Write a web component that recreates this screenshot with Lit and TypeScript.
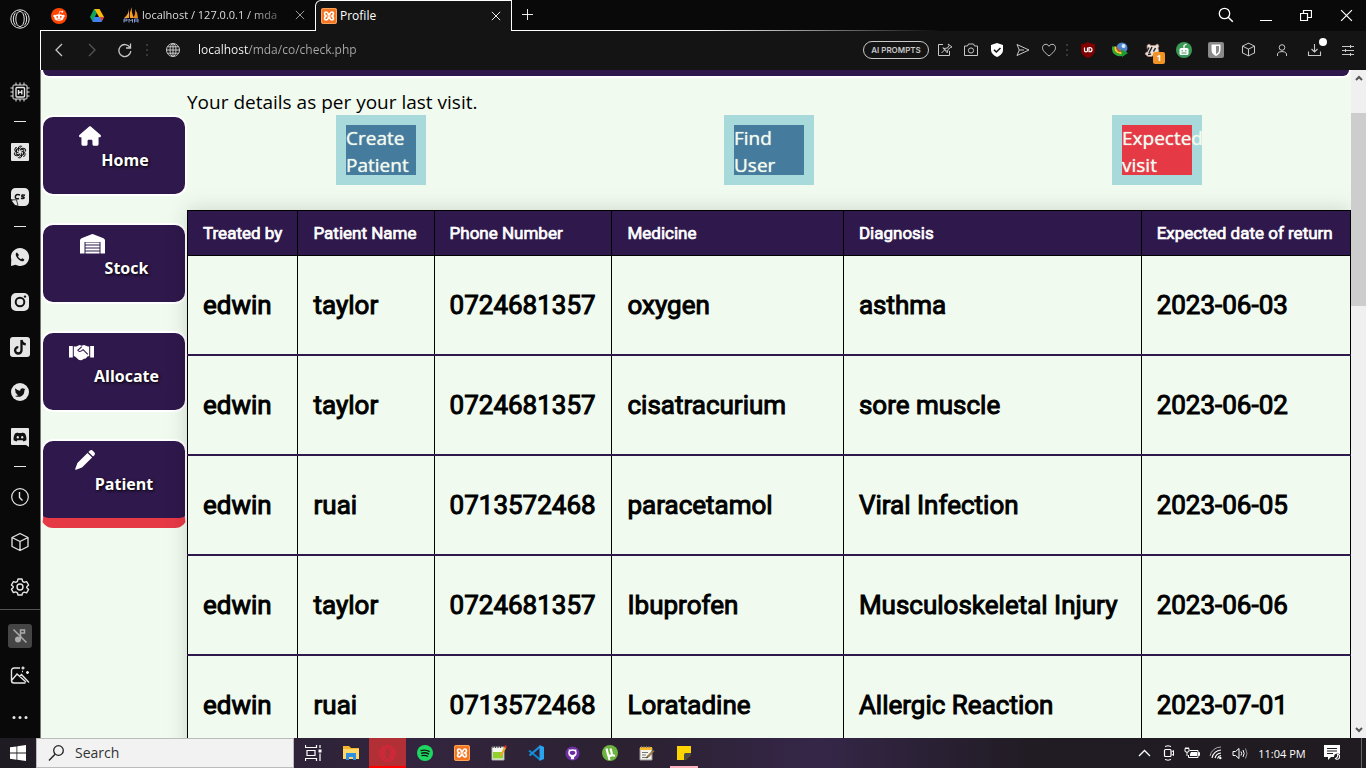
import { LitElement, html, css, svg, TemplateResult } from "lit";
import { customElement, property } from "lit/decorators.js";

type Glyph = TemplateResult;

/** Wraps drawing instructions in a sized SVG. */
const pic = (body: Glyph, w = 20, h = w, box = `0 0 ${w} ${h}`) =>
  html`<svg class="ico" width=${w} height=${h} viewBox=${box} fill="none" stroke="currentColor" aria-hidden="true">${body}</svg>`;

const cube = svg`<path d="M10 1.5 18 5.5v9L10 18.5 2 14.5v-9zM2 5.5l8 4 8-4M10 9.5v9" stroke-linejoin="round"/>`;
const xampp = svg`<rect x="0" y="0" width="16" height="16" rx="2" fill="#f37623" stroke="none"/><rect x=".5" y=".5" width="15" height="15" rx="2" stroke="#f9a55f"/><path d="M5.200 4C3 4 3 7 5.200 8 3 9 3 12 5.200 12 7.500 12 7 8.800 8 8.800S8.500 12 10.800 12C13 12 13 9 10.800 8 13 7 13 4 10.800 4 8.500 4 9 7.200 8 7.200S7.500 4 5.200 4z" stroke="#fff" stroke-width="1.700"/>`;
const operaO = svg`<circle cx="10" cy="10" r="9.200"/><ellipse cx="10" cy="10" rx="4.200" ry="7.600"/><path d="M6 3.500C2.500 6 2.500 14 6 16.500M14 3.500c3.500 2.500 3.500 10.500 0 13"/>`;
const cross = svg`<path d="m1 1 10 10M11 1 1 11" stroke-width="1.100"/>`;

const g: Record<string, Glyph> = {
  opera: pic(operaO),
  chip: pic(svg`<rect x="3" y="3" width="14" height="14" rx="1"/><rect x="6" y="5.500" width="8.500" height="9.500" rx="1" stroke-width="1.400"/><path d="M8.500 8v4.500M11.800 8v4.500M8.500 10.300h3.300" stroke-width="1.400"/><path d="M6 3V.5M10 3V.5M14 3V.5M6 17v2.500M10 17v2.500M14 17v2.500M3 6H.5M3 10H.5M3 14H.5M17 6h2.500M17 10h2.500M17 14h2.500"/>`),
  gpt: pic(svg`<rect x="1" y="1" width="18" height="18" rx="1" fill="#e6e6e6" stroke="none"/><g stroke="#111" stroke-width="1">${[0, 60, 120, 180, 240, 300].map((a) => svg`<path transform="rotate(${a} 10 10)" d="M8.300 9.400V6.300a2.200 2.200 0 0 1 4-1.300M8.300 7l2-1.200 2.800 1.600"/>`)}</g>`),
  cs: pic(svg`<path d="M5.500 1h9A4.500 4.500 0 0 1 19 5.500v9a4.500 4.500 0 0 1-4.500 4.500H8.500L1 12V5.500A4.500 4.500 0 0 1 5.500 1z" fill="#e6e6e6" stroke="none"/><path d="M1.500 13.500 7 14.500 8 18.500 5 18z" fill="#e6e6e6" stroke="none"/><path d="M1 12.800h5.500L8 18.800" stroke="#111" stroke-width=".8"/><path d="M10 8c-3-1.200-4.500 0-4.700 1.800S7 12.200 9 11.500M15 8.200c-2.200-.5-3.300-.2-3.300.7s2.600.7 2.500 1.700-1.800 1-3.300.6" stroke="#111" stroke-width="1.500"/>`),
  whatsapp: pic(svg`<path d="M10 1a9 9 0 1 1-4.400 16.800L1 19l.3-6.500A9 9 0 0 1 10 1z" fill="#e6e6e6" stroke="none"/><path d="M7 5.400c-1.600.7-1.600 2.700-.4 4.600s3.400 4 5.400 4.300c1.300.2 2.400-.8 2.300-1.900l-2-1.100-1.200 1c-1.300-.4-2.700-1.800-3.100-3l1-1.200z" fill="#111" stroke="none"/>`),
  instagram: pic(svg`<rect x="1" y="1" width="18" height="18" rx="5" fill="#e6e6e6" stroke="none"/><circle cx="10" cy="10" r="4.300" stroke="#111" stroke-width="2"/><circle cx="15" cy="4.600" r="1.200" fill="#111" stroke="none"/>`),
  tiktok: pic(svg`<rect x="0" y="0" width="20" height="20" rx="3" fill="#e6e6e6" stroke="none"/><path d="M11.500 3v10.300a3.200 3.200 0 1 1-3.200-3.200M11.500 3c.3 2.500 1.800 4 4.300 4.300" stroke="#111" stroke-width="2.300"/>`),
  twitter: pic(svg`<circle cx="10" cy="10" r="9" fill="#e6e6e6" stroke="none"/><path d="M15.500 6.600l-1.200.4c-1-1.500-4.300-1.100-4.100 1.700-2 0-3.600-1-4.800-2.500-.7 1.300-.3 2.500.7 3.200l-.9-.2c0 1.100.7 2 1.900 2.300h-.9c.3.900 1.100 1.400 2.100 1.500-1 .7-2 .9-3.200.9 4.800 2.600 9.500-.3 9.300-5.700z" fill="#111" stroke="none"/>`),
  discord: pic(svg`<path d="M2 1h16a1 1 0 0 1 1 1v18l-3-2H2a1 1 0 0 1-1-1V2a1 1 0 0 1 1-1z" fill="#e6e6e6" stroke="none"/><path d="M7.500 5.500 8 6h4l.5-.5 2.500 1c1.300 2.300 1.600 4.300 1.400 6.700l-2.900 1.400-.9-1.300H7.400l-.9 1.300-2.900-1.400C3.400 10.800 3.700 8.800 5 6.500z" fill="#111" stroke="none"/><ellipse cx="7.800" cy="10.300" rx="1.100" ry="1.300" fill="#e6e6e6" stroke="none"/><ellipse cx="12.200" cy="10.300" rx="1.100" ry="1.300" fill="#e6e6e6" stroke="none"/>`),
  clock: pic(svg`<circle cx="10" cy="10" r="8.300" stroke-width="1.200"/><path d="M9.500 5v5.500l3 3" stroke-width="1.400"/>`),
  cube: pic(svg`<g stroke-width="1.300">${cube}</g>`),
  cubeSmall: pic(svg`<g stroke-width="1.400">${cube}</g>`, 15, 15, "0 0 20 20"),
  gear: pic(svg`<path d="M8 2h4l.6 2.400 1.600.9 2.400-.7 2 3.400-1.800 1.700v1l1.800 1.700-2 3.400-2.400-.7-1.600.9L12 18H8l-.6-2.200-1.600-.9-2.400.7-2-3.400 1.800-1.700v-1L1.400 8l2-3.400 2.400.7 1.600-.9z" stroke-width="1.400" stroke-linejoin="round"/><circle cx="10" cy="10" r="3" stroke-width="1.400"/>`),
  muted: pic(svg`<rect width="24" height="24" rx="3" fill="#454545" stroke="none"/><circle cx="10" cy="15.500" r="3" fill="#aaa" stroke="none"/><path d="M12.500 15V6h4v3h-4" stroke="#aaa" stroke-width="1.500"/><path d="m5.500 5.500 13 13" stroke="#aaa" stroke-width="1.500"/>`, 24),
  image: pic(svg`<path d="M10 2H4a2.500 2.500 0 0 0-2.500 2.500v10A2.500 2.500 0 0 0 4 17h11.500M2 14l5-6 9 8M9.500 10.500l2-2 7.500 8M13 .5v3M11.500 2h3M17.500 5v3M16 6.500h3M12 5.500h1" stroke-width="1.400"/>`),
  dots: pic(svg`<g fill="currentColor" stroke="none"><circle cx="4" cy="11.500" r="1.500"/><circle cx="10" cy="11.500" r="1.500"/><circle cx="16" cy="11.500" r="1.500"/></g>`),

  reddit: pic(svg`<circle cx="8" cy="8" r="8" fill="#ff4500" stroke="none"/><ellipse cx="8" cy="9.500" rx="4.600" ry="3.300" fill="#fff" stroke="none"/><g fill="#fff" stroke="none"><circle cx="11.300" cy="3.800" r="1"/><circle cx="3.500" cy="8" r="1.200"/><circle cx="12.500" cy="8" r="1.200"/></g><path d="m8 6 .7-2.800 2.300.6" stroke="#fff" stroke-width=".7"/><circle cx="6.200" cy="8.900" r=".9" fill="#ff4500" stroke="none"/><circle cx="9.800" cy="8.900" r=".9" fill="#ff4500" stroke="none"/><path d="M6 10.900q2 1.300 4 0" stroke="#ff4500" stroke-width=".6"/>`, 16),
  drive: pic(svg`<g stroke="none"><path d="M5 1h5L3.500 13.500 1 9z" fill="#11a35b"/><path d="M5.500 1h5L15 9h-5z" fill="#ffbe05"/><path d="M5 9h10l-2.500 5h-9z" fill="#3f83f3"/><path d="M11 9h4l-2.300 4.600z" fill="#e6402f"/></g>`, 16),
  pma: pic(svg`<g stroke="none"><path d="M6 1Q6 7 1 11h5zM9 0q-3 6-2 11h4Q8 5 9 0z" fill="#f7a12c"/><path d="M12 2q1 5-2 9h5q0-5-3-9z" fill="#e88a1a"/></g><path d="M1 12v3.500M1 12h3v1.800H1M6 15.500V12l1.700 2L9.500 12v3.500M11.500 15.500V12H15v3.500M11.500 14H15" stroke="#8a9ad0"/>`, 16),
  xampp: pic(xampp, 16),
  close: pic(cross, 10, 10, "0 0 12 12"),
  closeTab: pic(cross, 10, 10, "0 0 12 12"),
  plus: pic(svg`<path d="M6 0v12M0 6h12"/>`, 11, 11, "0 0 12 12"),
  search: pic(svg`<circle cx="6.500" cy="6.500" r="5.200" stroke-width="1.300"/><path d="m10.200 10.200 4.600 4.600" stroke-width="1.500"/>`, 16),
  min: pic(svg`<path d="M0 12.500h12"/>`, 12, 14),
  restore: pic(svg`<path d="M.5 4.500h7v7h-7zM3.500 4.500v-3h8v7h-4" stroke-width="1.200"/>`, 12),
  win: pic(cross, 13, 13, "0 0 12 12"),
  back: pic(svg`<path d="M8 2 2 8l6 6" stroke-width="1.300"/>`, 10, 16),
  fwd: pic(svg`<path d="m2 2 6 6-6 6" stroke-width="1.300"/>`, 10, 16),
  reload: pic(svg`<path d="M13 5.500A6 6 0 1 0 13.800 9M13.500 1.500v4.500H9" stroke-width="1.300"/>`, 16),
  globe: pic(svg`<circle cx="8" cy="8" r="6.500"/><ellipse cx="8" cy="8" rx="3" ry="6.500"/><path d="M1.500 8h13M2.500 4.800h11M2.500 11.200h11M8 1.500v13"/>`, 16),
  sep: pic(svg`<path d="M1 0v2M1 5v2M1 10v2" stroke="#444" stroke-width="1.500"/>`, 2, 12),
  pin: pic(svg`<path d="M6 2.500H1.500v11h11V9M4.500 11l3-3M6 5.500 9.500 9M7 6.500l3.500-.5L12 3.500l-1-1.500 4 3-1.500.5-2.500 2-.8 3.300L6 6z"/>`, 16),
  camera: pic(svg`<path d="M1.500 4h3l1-2h5l1 2h3v9.500h-13z" stroke-linejoin="round"/><circle cx="8" cy="8.500" r="2.600"/>`, 16),
  shield: pic(svg`<path d="M8 1 14 3v5c0 3-2.500 5.500-6 7-3.500-1.500-6-4-6-7V3z" fill="#fff" stroke="none"/><path d="m5 7.700 2.300 2.300L11.500 6" stroke="#141414" stroke-width="1.600"/>`, 16),
  send: pic(svg`<path d="M2 2.500 14 8 2 13.500 4.300 8zM4.300 8H9" stroke-linejoin="round"/>`, 16),
  heart: pic(svg`<path d="M8 14C4 10.800 1.500 8.500 1.500 5.700 1.500 2 6.200 1 8 4.300 9.800 1 14.500 2 14.500 5.700 14.500 8.500 12 10.800 8 14z"/>`, 16),
  ublock: pic(svg`<path d="M8 0q3 2 7 2v6c0 4-3 6.500-7 8-4-1.500-7-4-7-8V2q4 0 7-2z" fill="#800000" stroke="none"/><path d="M4.500 5.500v3.300q0 1 1.500 1t1.500-1V5.500M9 5.700v4h.8q2.200 0 2.200-2t-2.200-2z" stroke="#fff" stroke-width="1.200"/>`, 16),
  idm: pic(svg`<circle cx="10" cy="6" r="5.500" fill="#4f83cc" stroke="none"/><circle cx="11.500" cy="4" r="2" fill="#d8ecff" stroke="none"/><path d="M1.500 4.500C0 11 6 15 12 12" stroke="#2fa83c" stroke-width="2.500"/><path d="M3.500 4.500C2.500 9 6 12 11 10.500" stroke="#f3d321" stroke-width="2"/><path d="M5.500 5.500C5 8 7.500 10 10 9" stroke="#e04828" stroke-width="1.600"/><path d="m9 7 7 4-6 4z" fill="#1f9a30" stroke="none"/>`, 16),
  badger: pic(svg`<path d="M3 3.500 5 2l2 1.500h4L13.500 2 15 4l-1 2 1 3.500-4 2-3 3H4L1 12l2.500-3.500z" fill="#e8e0da" stroke="#b98a72" stroke-width=".8"/><path d="M5 5.500 2.500 10M8 5 5 11M11.500 6l-2 3.500M4 12.500l3-.5" stroke="#222" stroke-width="1.500"/>`, 16),
  robot: pic(svg`<circle cx="8" cy="8" r="8" fill="#3a9a55" stroke="none"/><rect x="3.500" y="6" width="9" height="7" rx="1.500" fill="#fff" stroke="none"/><path d="M8 6V3.500L10 2M5.500 8.800h1.500M9 8.800h1.500M5.500 11h5M2.500 8v3M13.500 8v3" stroke="#3a9a55"/><path d="M8 6V3.500L10.500 2" stroke="#fff" stroke-width="1.300"/>`, 16),
  bitwarden: pic(svg`<rect width="16" height="16" rx="2" fill="#8a8a8a" stroke="none"/><path d="M3.500 2.500h9V8c0 3-2 4.700-4.500 6-2.500-1.300-4.500-3-4.500-6z" fill="#fff" stroke="none"/><path d="M8 4h3v4c0 2-1 3-3 4.200z" fill="#8a8a8a" stroke="none"/>`, 16),
  user: pic(svg`<circle cx="7" cy="4.500" r="2.800"/><path d="M2.500 13V10.500Q4 8.500 7 8.500t4.500 2V13"/>`, 14),
  download: pic(svg`<path d="M7.500 2v8M4.500 7l3 3 3-3M1.500 9.500v4h12v-4" stroke-width="1.100"/>`, 15),
  sliders: pic(svg`<path d="M1 3.500h12M1 7.500h12M1 11.500h12M9.500 2v3M4.500 6v3M9.500 10v3"/>`, 14),
  up: pic(svg`<path d="m1 5 3-3 3 3" stroke="#555" stroke-width="2"/>`, 8, 7),
  down: pic(svg`<path d="m1 2 3 3 3-3" stroke="#555" stroke-width="2"/>`, 8, 7),

  home: pic(svg`<path fill="currentColor" stroke="none" d="M575.8 255.500c0 18-15 32.100-32 32.100h-32l.7 160.200c0 2.700-.2 5.400-.5 8.100V472c0 22.100-17.900 40-40 40H392c-22.100 0-40-17.900-40-40v-88c0-17.700-14.300-32-32-32h-64c-17.700 0-32 14.300-32 32v88c0 22.100-17.900 40-40 40h-80c-22.100 0-40-17.900-40-40V287.600H32c-18 0-32-14-32-32.100 0-9 3-17 10-24L266.400 8c7-7 15-8 22-8s15 2 21 7l255.400 224.500c8 7 12 15 11 24z"/>`, 22, 20, "0 0 576 512"),
  stock: pic(svg`<path fill="currentColor" stroke="none" d="M0 19.500V6.500Q0 5 1.500 4.300L11.700.3q.8-.4 1.600 0l10.200 4Q25 5 25 6.500v13h-4.500V8h-16v11.500z"/><path d="M5.500 9.500h14M5.500 12.500h14M5.500 15.500h14M5.500 18.500h14" stroke-width="2"/>`, 25, 20),
  allocate: pic(svg`<g fill="currentColor" stroke="none"><path d="M0 4h3.800v11.500H0zM21.200 4H25v11.500h-3.800z"/><path d="M4.800 4.500h2.400L10.500 3l2 .8 2.500-.8 4 1.500h1.200v9.800h-1.500l-2 2.200-1.700.2-2.500 1.500-2.500-.3-4.200-3.600H4.800z"/></g><path d="m12.800 4.600-4 3.700q1.300 2 3.600.6l1.700-1.200 4.700 4.600" stroke="#2f184b" stroke-width="1.100"/>`, 25, 20),
  patient: pic(svg`<path fill="currentColor" stroke="none" d="m13.400 2 1.200-1.200q1.600-1.400 3.200 0l1.400 1.400q1.500 1.600 0 3.200L18 6.600zM12.500 2.900l4.600 4.600L7 17.600l-6 2.200q-.9.200-.8-.8l2.200-6z"/>`, 20),

  start: pic(svg`<path d="M0 2.300 6.500 1.400V7.600H0zM7.300 1.300 16 0v7.600H7.300zM0 8.400h6.500v6.300L0 13.800zM7.300 8.400H16V16l-8.700-1.200z" fill="#fff" stroke="none"/>`, 16),
  find: pic(svg`<circle cx="10.500" cy="5.500" r="4.800" stroke-width="1.300"/><path d="M7 9.200 1 15.500" stroke-width="1.400"/>`, 17),
  task: pic(svg`<path d="M.5 0v2.500h11V0M2 5.500h8v5H2zM.5 16v-2.500h11V16M15 0v3M15 8.500V16" stroke-width="1.200"/><path d="M13.500 4.500h3v3h-3z" fill="#fff" stroke="none"/>`, 17, 16),
  folder: pic(svg`<g stroke="none"><path d="M0 1h6l2 2h8v11H0z" fill="#f5b52a"/><path d="M0 4h16v10H0z" fill="#ffd869"/><path d="M3 8h10v7h-3v-3H6v3H3z" fill="#2f8fe0"/></g>`, 16),
  operaRed: pic(svg`<g stroke="#f0203f">${operaO}</g>`, 17, 17, "0 0 20 20"),
  spotify: pic(svg`<circle cx="8" cy="8" r="8" fill="#1ed760" stroke="none"/><path d="M3.500 5.700q5-1.500 9.200 1M4 8.300q4.500-1.300 8 .9M4.500 10.700q3.500-1 6.500.8" stroke="#151515" stroke-width="1.400"/>`, 16),
  notepadpp: pic(svg`<path d="M1 2h12v13H1z" fill="#f4f7ef" stroke="#aaa"/><path d="M2 7h10v6.500H2z" fill="#8fd02f" stroke="none"/><path d="M2 1v2M4.500 1v2M7 1v2M9.500 1v2" stroke="#444"/><path d="m14.500 2-5 9" stroke="#f2a51d" stroke-width="2"/><path d="m13.500 1 2 1" stroke="#d22" stroke-width="2"/>`, 16),
  vscode: pic(svg`<path d="M12 14.500 1 5.500" stroke="#0d84cf" stroke-width="2.200"/><path d="M1.500 10.500 12 1.500" stroke="#1b8fdc" stroke-width="2.200"/><path d="m11.500 0 4.500 2v12l-4.500 2z" fill="#2aa4ee" stroke="none"/>`, 16),
  github: pic(svg`<circle cx="8" cy="8" r="7.500" fill="#6e2fa5" stroke="none"/><path d="M8 3.500c-6 0-5.500 7-1.700 8.300V14h3.400v-2.200C13.500 10.500 14 3.500 8 3.500z" fill="#fff" stroke="none"/><path d="M4 6.500V3.200l2 1.200h4l2-1.200v3.300q0 3.500-4 3.500T4 6.500z" fill="#fff" stroke="none"/><ellipse cx="8" cy="7.300" rx="3" ry="2.200" fill="#6e2fa5" stroke="none"/>`, 15, 15, "0 0 16 16"),
  utorrent: pic(svg`<circle cx="8" cy="8" r="8" fill="#6cb33f" stroke="none"/><path d="M4.500 3.500 6 9.500q1 2 3 1.200 1.300-.7.800-2.200l-1.300-5M10 9.500q1 1.500 3 1" stroke="#fff" stroke-width="2.200"/><path d="m6 9 1.500 6" stroke="#fff" stroke-width="2"/>`, 16),
  note: pic(svg`<path d="M1 3h12v12H1z" fill="#f5f3ea" stroke="#999"/><path d="M1 2h12v3H1z" fill="#f5b82a" stroke="none"/><path d="M2.500 1v2M5 1v2M7.500 1v2M10 1v2M3 7.500h6M3 10h4M3 12.500h6" stroke="#777"/><path d="m14.500 5-6 6-1 2 2-1 6-6z" fill="#e9a23b" stroke="#333" stroke-width=".7"/>`, 16),
  sticky: pic(svg`<path d="M1 1h14v14H1z" fill="#ffd400" stroke="none"/><path d="M15 8v1.500L9.500 15H8V9.500Q8 8 9.500 8z" fill="#4a4a4a" stroke="none"/><path d="M15 9.500V15H9.500z" fill="#33262f" stroke="none"/>`, 16),
  caret: pic(svg`<path d="m1 7 5.500-5.500L12 7" stroke-width="1.300"/>`, 13, 9),
  meet: pic(svg`<rect x="2.500" y="4.500" width="6.500" height="7" rx="1" stroke-width="1.200"/><path d="m9.500 7 2-1.500v5L9.500 9M3 1.500q3-1.500 6 0M3 14.500q3 1.500 6 0"/>`, 13, 16),
  battery: pic(svg`<path d="M5.500 4.500H14v7H4.500V9M14.500 6.500v3h1v-3z"/><path d="M7 6h6v4H6V8z" fill="#fff" stroke="none"/><path d="M1 2.500v3q2 1.500 4 0v-3zM2 2.500V1M4 2.500V1M3 6v4" />`, 16, 14),
  wifi: pic(svg`<path d="M1 11A11 11 0 0 1 12 2" stroke="#aaa"/><path d="M3 13a9.500 9.500 0 0 1 9-8M6 13a7 7 0 0 1 6-5M8.500 13.500A4.500 4.500 0 0 1 12 10.500" stroke-width="1.200"/><circle cx="11.300" cy="13" r="1.200" fill="#fff" stroke="none"/>`, 14, 16),
  volume: pic(svg`<path d="M1 5.500h2.500L7 2.500v10L3.500 9.500H1z"/><path d="M9 5.500q1.300 2 0 4M11 4q2.300 3.500 0 7"/><path d="M13.500 2.500q3 5 0 10" stroke="#999"/>`, 17, 15),
  action: pic(svg`<path d="M0 0h16v12H7l-3 3v-3H0z" fill="#fff" stroke="none"/><path d="M3 3.500h10M3 6h10M3 8.500h6" stroke="#201c22" stroke-width="1.200"/><circle cx="13.500" cy="12" r="3.500" fill="#201c22" stroke="none"/><path d="M12 14q4 1 3.500-3.500-1-1.500-2-1.300 1 3-2 4.300z" stroke="#fff" stroke-width="1.100"/>`, 18, 17),
};

const reset = css`
  :host { box-sizing: border-box; font-family: "Open Sans", "Noto Sans", sans-serif; }
  *, *::before, *::after { box-sizing: border-box; }
  button { margin: 0; padding: 0; border: 0; background: none; color: inherit; font: inherit; display: flex; align-items: center; justify-content: center; flex: none; }
  .ico { display: block; flex: none; }
`;

@customElement("side-rail")
class SideRail extends LitElement {
  static styles = [reset, css`
    :host { width: 40px; flex: none; display: flex; flex-direction: column; background: #090909; color: #e6e6e6; overflow: hidden; }
    button { height: 45px; }
    .brand { height: 38px; margin-bottom: 31px; }
    .dash { height: 15px; flex: none; display: flex; align-items: center; justify-content: center; }
    .dash::before { content: ""; width: 12px; height: 1px; background: #e6e6e6; }
    .foot { border-top: 1px solid #555; padding-top: 6px; }
    .foot button { width: 100%; height: 40px; }
  `];
  render() {
    const items = ["chip", "-", "gpt", "cs", "-", "whatsapp", "instagram", "tiktok", "twitter", "discord", "-", "clock", "cube", "gear"];
    return html`
      <button class="brand" aria-label="Opera menu">${g.opera}</button>
      ${items.map((i) => i === "-" ? html`<div class="dash"></div>` : html`<button aria-label=${i}>${g[i]}</button>`)}
      <div class="foot">${["muted", "image", "dots"].map((i) => html`<button aria-label=${i}>${g[i]}</button>`)}</div>
    `;
  }
}

@customElement("browser-bar")
class BrowserBar extends LitElement {
  static styles = [reset, css`
    :host { display: block; flex: none; color: #fff; }
    .tabs { display: flex; height: 31px; background: linear-gradient(to right, #fff 0 50%, #090909 68%) bottom / 100% 1px no-repeat #090909; font-size: 12px; }
    .pinned { width: 38px; }
    .tab { display: flex; align-items: center; gap: 3px; padding-left: 7px; width: 199px; height: 30px; }
    .tab .label { flex: 1; overflow: hidden; white-space: nowrap; line-height: 30px; text-align: left; }
    .idle .label { font-size: 11px; color: #ddd; -webkit-mask-image: linear-gradient(to right, #000 75%, rgba(0, 0, 0, 0.3)); mask-image: linear-gradient(to right, #000 75%, rgba(0, 0, 0, 0.3)); }
    .tab button { width: 30px; height: 30px; }
    .idle button { color: #aaa; }
    .active { height: 31px; width: 197px; background: #141414; border: 1px solid #fff; border-bottom: 0; border-top-left-radius: 6px; padding-left: 5px; }
    .active .label { font-size: 12px; }
    .plus { width: 30px; height: 28px; }
    .window { margin-left: auto; display: flex; }
    .window button { width: 40px; height: 30px; }
    .tools { display: flex; align-items: center; height: 39px; background: #141414; border-left: 1px solid #fff; color: #c8c8c8; padding: 0 2px 2px 1px; }
    .nav { width: 33px; height: 36px; }
    .nav:disabled { color: #555; }
    .sep { display: flex; justify-content: center; width: 12px; flex: none; }
    .narrow { width: 10px; }
    .site { width: 39px; }
    .url { flex: 1; min-width: 0; border: 0; padding: 0 6px; font: 12px/20px "Open Sans", "Noto Sans", sans-serif; color: transparent; background: linear-gradient(to right, #fff 57px, #aaa 57px); -webkit-background-clip: text; background-clip: text; outline: 0; }
    .pill { height: 18px; width: 66px; border: 1px solid #c8c8c8; border-radius: 9px; font: 600 8px/16px Inter, sans-serif; margin-right: 3px; white-space: nowrap; }
    .quick { width: 26px; height: 36px; }
    .ext { width: 32px; height: 36px; position: relative; }
    .wide { width: 33px; }
    .badge { position: absolute; right: 3px; bottom: 4px; width: 12px; height: 12px; border-radius: 2px; background: #f29423; color: #fff; font: 700 9px/12px "Open Sans", sans-serif; }
    .dot { position: absolute; right: 4px; top: 6px; width: 8px; height: 8px; border-radius: 50%; background: #fff; }
  `];
  render() {
    return html`
      <div class="tabs">
        <button class="pinned" aria-label="Reddit">${g.reddit}</button>
        <button class="pinned" aria-label="Drive">${g.drive}</button>
        <div class="tab idle">${g.pma}<span class="label">localhost / 127.0.0.1 / mda</span><button aria-label="Close tab">${g.close}</button></div>
        <div class="tab active">${g.xampp}<span class="label">Profile</span><button aria-label="Close tab">${g.closeTab}</button></div>
        <button class="plus" aria-label="New tab">${g.plus}</button>
        <div class="window">${["search", "min", "restore", "win"].map((i) => html`<button aria-label=${i}>${g[i]}</button>`)}</div>
      </div>
      <div class="tools">
        <button class="nav" aria-label="Back">${g.back}</button>
        <button class="nav" aria-label="Forward" disabled>${g.fwd}</button>
        <button class="nav" aria-label="Reload">${g.reload}</button>
        <span class="sep">${g.sep}</span>
        <button class="site" aria-label="Site information">${g.globe}</button>
        <input class="url" aria-label="Address" .value=${"localhost/mda/co/check.php"} />
        <button class="pill">AI PROMPTS</button>
        ${["pin", "camera", "shield", "send", "heart"].map((i) => html`<button class="quick" aria-label=${i}>${g[i]}</button>`)}
        <span class="sep narrow">${g.sep}</span>
        <button class="ext" aria-label="Ad blocker">${g.ublock}</button>
        <button class="ext" aria-label="Download manager">${g.idm}</button>
        <button class="ext" aria-label="Tracker blocker">${g.badger}<span class="badge">1</span></button>
        <button class="ext" aria-label="Assistant">${g.robot}</button>
        <button class="ext" aria-label="Passwords">${g.bitwarden}</button>
        <button class="ext wide" aria-label="Extensions">${g.cubeSmall}</button>
        <button class="ext wide" aria-label="Account">${g.user}</button>
        <button class="ext wide" aria-label="Downloads">${g.download}<span class="dot"></span></button>
        <button class="ext wide" aria-label="Easy setup">${g.sliders}</button>
      </div>
    `;
  }
}

@customElement("clinic-page")
class ClinicPage extends LitElement {
  static styles = [reset, css`
    :host { display: block; flex: 1; min-width: 0; overflow: hidden; background: #f1faee; color: #000; }
    .banner { height: 8px; margin: 0 0 11px; border: 2px solid #fff; border-top: 0; border-radius: 0 0 12px 12px; background: #2f184b; }
    .layout { display: flex; align-items: flex-start; }
    nav { width: 146px; flex: none; display: flex; flex-direction: column; gap: 27px; padding-top: 26px; }
    .card { display: grid; grid-template: 24px 24px / auto auto; justify-content: center; align-items: center; height: 81px; padding-top: 7px; border: 2px solid #fff; border-radius: 12px; background: #2f184b; color: #fff; font-size: 16px; font-weight: 700; line-height: 24px; text-decoration: none; text-shadow: 1px 1px 3px #000; }
    .card span { grid-area: 2 / 2; }
    .current { height: 89px; border-bottom: 10px solid #e63946; }
    main { flex: 1; min-width: 0; }
    .intro { margin: 0; font-size: 19px; line-height: 26px; }
    .actions { display: grid; grid-template-columns: repeat(3, 1fr); justify-items: center; margin-bottom: 25px; }
    .action { width: 90px; height: 70px; border: 10px solid #a8dadc; background: #457b9d; color: #f1faee; font-size: 19px; line-height: 27px; text-decoration: none; text-shadow: 0 0 1px #f1faee; }
    .chosen { background: #e63946; }
    table { width: 100%; table-layout: fixed; border-collapse: collapse; font-family: Roboto, sans-serif; box-shadow: 0 0 20px rgba(0, 0, 0, 0.15); }
    th, td { padding: 0 15px; text-align: left; font-weight: 400; border: 1px solid #000; white-space: nowrap; }
    th { height: 45px; background: #2f184b; color: #fff; font-size: 17px; -webkit-text-stroke: 0.7px #fff; }
    td { height: 100px; font-size: 26px; border-bottom: 2px solid #2f184b; -webkit-text-stroke: 1px #000; }
    tbody tr:first-child td { height: 99px; }
    .c1 { width: 9.5%; } .c2 { width: 11.7%; } .c3 { width: 15.3%; } .c4 { width: 19.9%; } .c5 { width: 25.6%; } .c6 { width: 18%; }
  `];
  render() {
    const heads = ["Treated by", "Patient Name", "Phone Number", "Medicine", "Diagnosis", "Expected date of return"];
    const rows = [
      ["edwin", "taylor", "0724681357", "oxygen", "asthma", "2023-06-03"],
      ["edwin", "taylor", "0724681357", "cisatracurium", "sore muscle", "2023-06-02"],
      ["edwin", "ruai", "0713572468", "paracetamol", "Viral Infection", "2023-06-05"],
      ["edwin", "taylor", "0724681357", "Ibuprofen", "Musculoskeletal Injury", "2023-06-06"],
      ["edwin", "ruai", "0713572468", "Loratadine", "Allergic Reaction", "2023-07-01"],
    ];
    const links = [["home", "Home"], ["stock", "Stock"], ["allocate", "Allocate"], ["patient", "Patient"]];
    return html`
      <div class="banner"></div>
      <div class="layout">
        <nav>${links.map(([i, t]) => html`<a href="#" class="card ${i === "patient" ? "current" : ""}">${g[i]}<span>${t}</span></a>`)}</nav>
        <main>
          <p class="intro">Your details as per your last visit.</p>
          <div class="actions">
            <a class="action" href="#">Create Patient</a>
            <a class="action" href="#">Find<br />User</a>
            <a class="action chosen" href="#">Expected visit</a>
          </div>
          <table>
            <colgroup>${[1, 2, 3, 4, 5, 6].map((n) => html`<col class="c${n}" />`)}</colgroup>
            <thead><tr>${heads.map((h) => html`<th scope="col">${h}</th>`)}</tr></thead>
            <tbody>${rows.map((r) => html`<tr>${r.map((c) => html`<td>${c}</td>`)}</tr>`)}</tbody>
          </table>
        </main>
      </div>
    `;
  }
}

@customElement("task-bar")
class TaskBar extends LitElement {
  @property() time = "11:04 PM";
  static styles = [reset, css`
    :host { display: flex; flex: none; height: 30px; background: linear-gradient(to right, #1f1b22, #33253f 30%, #2b2130 46%, #352648 60%, #211c24 75%, #1f1b20); color: #fff; }
    .start { width: 36px; }
    .search { width: 258px; flex: none; display: flex; align-items: center; gap: 10px; padding-left: 11px; background: #f2f2f2; border: 1px solid #bbb; color: #222; }
    .search input { flex: 1; min-width: 0; border: 0; padding: 0; background: none; outline: 0; font: 14px/20px "Open Sans", "Noto Sans", sans-serif; }
    .search input::placeholder { color: #333; opacity: 1; }
    .app { width: 37px; }
    .app:nth-of-type(2) { width: 38px; }
    .running { background: #b23035; border-bottom: 2px solid #f00; padding-top: 2px; }
    .open { background: linear-gradient(#ffb3c1, #ffb3c1) bottom / 28px 2px no-repeat; }
    .tray { margin-left: auto; display: flex; align-items: center; }
    .tray button { width: 24px; height: 30px; }
    .tray .time { width: 60px; font-size: 11px; }
    .tray .notes { width: 42px; margin-right: 7px; }
    .peek { width: 5px; height: 30px; border-left: 1px solid #666; }
  `];
  render() {
    const apps = ["task", "folder", "operaRed", "spotify", "xampp", "notepadpp", "vscode", "github", "utorrent", "note", "sticky"];
    const state: Record<string, string> = { operaRed: "running", sticky: "open" };
    return html`
      <button class="start" aria-label="Start">${g.start}</button>
      <label class="search">${g.find}<input placeholder="Search" aria-label="Search" /></label>
      ${apps.map((a) => html`<button class="app ${state[a] ?? ""}" aria-label=${a}>${g[a]}</button>`)}
      <div class="tray">
        ${["caret", "meet", "battery", "wifi", "volume"].map((i) => html`<button aria-label=${i}>${g[i]}</button>`)}
        <button class="time">${this.time}</button>
        <button class="notes" aria-label="Notifications">${g.action}</button>
        <span class="peek"></span>
      </div>
    `;
  }
}

@customElement("app-root")
class AppRoot extends LitElement {
  static styles = [reset, css`
    :host { display: flex; flex-direction: column; height: 100vh; overflow: hidden; }
    .browser { flex: 1; min-height: 0; display: flex; background: #090909; }
    .pane { flex: 1; min-width: 0; display: flex; flex-direction: column; }
    .view { flex: 1; min-height: 0; display: flex; border-left: 1px solid #777; }
    .scroll { width: 15px; flex: none; display: flex; flex-direction: column; background: #f0f0f0; }
    .scroll button { height: 17px; }
    .before { flex: 26; }
    .thumb { flex: 193; background: #cdcdcd; }
    .after { flex: 415; }
  `];
  render() {
    return html`
      <div class="browser">
        <side-rail></side-rail>
        <div class="pane">
          <browser-bar></browser-bar>
          <div class="view">
            <clinic-page></clinic-page>
            <div class="scroll">
              <button aria-label="Scroll up">${g.up}</button>
              <div class="before"></div><div class="thumb"></div><div class="after"></div>
              <button aria-label="Scroll down">${g.down}</button>
            </div>
          </div>
        </div>
      </div>
      <task-bar></task-bar>
    `;
  }
}
